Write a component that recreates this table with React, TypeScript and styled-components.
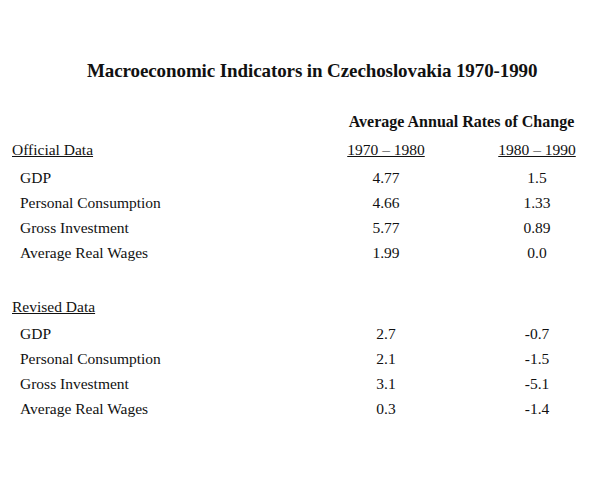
import React from 'react';
import styled, { createGlobalStyle } from 'styled-components';

interface Indicator {
  label: string;
  early: string;
  late: string;
}

interface Section {
  title: string;
  rows: Indicator[];
}

const sections: Section[] = [
  {
    title: 'Official Data',
    rows: [
      { label: 'GDP', early: '4.77', late: '1.5' },
      { label: 'Personal Consumption', early: '4.66', late: '1.33' },
      { label: 'Gross Investment', early: '5.77', late: '0.89' },
      { label: 'Average Real Wages', early: '1.99', late: '0.0' },
    ],
  },
  {
    title: 'Revised Data',
    rows: [
      { label: 'GDP', early: '2.7', late: '-0.7' },
      { label: 'Personal Consumption', early: '2.1', late: '-1.5' },
      { label: 'Gross Investment', early: '3.1', late: '-5.1' },
      { label: 'Average Real Wages', early: '0.3', late: '-1.4' },
    ],
  },
];

const GlobalStyle = createGlobalStyle`
  html, body {
    margin: 0;
    padding: 0;
    background: #ffffff;
  }
  body {
    width: 600px;
    height: 480px;
    overflow: hidden;
    font-family: "Liberation Serif", "Times New Roman", serif;
    color: #111;
  }
`;

const Slide = styled.div`
  padding: 59px 0 0 12px;
`;

const Title = styled.h1`
  margin: 0 0 26px 75px;
  font-size: 19px;
  line-height: 24px;
  letter-spacing: -0.1px;
  font-weight: bold;
`;

const Row = styled.div<{ $top?: number }>`
  display: grid;
  grid-template-columns: 263px 80px 80px;
  column-gap: 71px;
  margin-top: ${(p) => p.$top ?? 0}px;
  font-size: 15.5px;
  line-height: 25px;
`;

const Heading = styled.div`
  grid-column: 2 / 4;
  text-align: center;
  font-size: 16px;
  font-weight: bold;
  white-space: nowrap;
`;

const SectionName = styled.div`
  text-decoration: underline;
  text-decoration-thickness: 1px;
`;

const Period = styled.div`
  text-align: center;
  text-decoration: underline;
  text-decoration-thickness: 1px;
  white-space: nowrap;
`;

const Label = styled.div`
  padding-left: 8px;
`;

const Value = styled.div`
  text-align: center;
`;

const App: React.FC = () => {
  return (
    <Slide>
      <GlobalStyle />
      <Title>Macroeconomic Indicators in Czechoslovakia 1970-1990</Title>
      <Row>
        <Heading>Average Annual Rates of Change</Heading>
      </Row>
      {sections.map((section, i) => (
        <React.Fragment key={section.title}>
          <Row $top={i === 0 ? 3 : 29}>
            <SectionName>{section.title}</SectionName>
            {i === 0 && <Period>1970 – 1980</Period>}
            {i === 0 && <Period>1980 – 1990</Period>}
          </Row>
          {section.rows.map((row, j) => (
            <Row key={row.label} $top={j === 0 ? (i === 0 ? 3 : 2) : 0}>
              <Label>{row.label}</Label>
              <Value>{row.early}</Value>
              <Value>{row.late}</Value>
            </Row>
          ))}
        </React.Fragment>
      ))}
    </Slide>
  );
};

export default App;
